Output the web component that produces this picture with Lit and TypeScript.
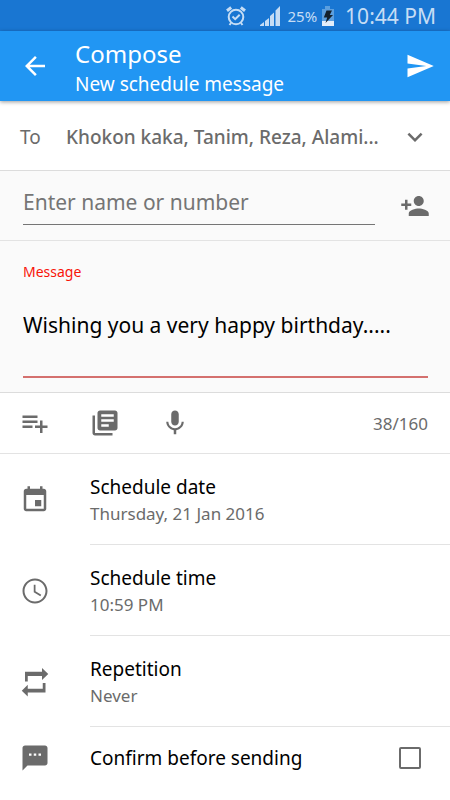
import { LitElement, html, css, svg } from "lit";
import { customElement, property, state } from "lit/decorators.js";

const ICONS = {
  back: svg`<path d="M20 11H7.83l5.59-5.59L12 4l-8 8 8 8 1.41-1.41L7.83 13H20v-2z"/>`,
  send: svg`<path d="M2.01 21L23 12 2.01 3 2 10l15 2-15 2z"/>`,
  chevron: svg`<path d="M16.59 8.59L12 13.17 7.41 8.59 6 10l6 6 6-6z"/>`,
  personAdd: svg`<path d="M15 12c2.21 0 4-1.79 4-4s-1.79-4-4-4-4 1.79-4 4 1.79 4 4 4zm-9-2V7H4v3H1v2h3v3h2v-3h3v-2H6zm9 4c-2.67 0-8 1.34-8 4v2h16v-2c0-2.66-5.33-4-8-4z"/>`,
  listAdd: svg`<path d="M14 10H2v2h12v-2zm0-4H2v2h12V6zm4 8v-4h-2v4h-4v2h4v4h2v-4h4v-2h-4zM2 16h8v-2H2v2z"/>`,
  library: svg`<path d="M4 6H2v14c0 1.1.9 2 2 2h14v-2H4V6zm16-4H8c-1.1 0-2 .9-2 2v12c0 1.1.9 2 2 2h12c1.1 0 2-.9 2-2V4c0-1.1-.9-2-2-2zm-1 9H9V9h10v2zm-4 4H9v-2h6v2zm4-8H9V5h10v2z"/>`,
  mic: svg`<path d="M12 14c1.66 0 2.99-1.34 2.99-3L15 5c0-1.66-1.34-3-3-3S9 3.34 9 5v6c0 1.66 1.34 3 3 3zm5.3-3c0 3-2.54 5.1-5.3 5.1S6.7 14 6.7 11H5c0 3.41 2.72 6.23 6 6.72V21h2v-3.28c3.28-.48 6-3.3 6-6.72h-1.7z"/>`,
  event: svg`<path d="M17 12h-5v5h5v-5zM16 1v2H8V1H6v2H5c-1.11 0-1.99.9-1.99 2L3 19c0 1.1.89 2 2 2h14c1.1 0 2-.9 2-2V5c0-1.1-.9-2-2-2h-1V1h-2zm3 18H5V8h14v11z"/>`,
  clock: svg`<path d="M11.99 2C6.47 2 2 6.48 2 12s4.47 10 9.99 10C17.52 22 22 17.52 22 12S17.52 2 11.99 2zM12 20.4c-4.64 0-8.4-3.76-8.4-8.4s3.76-8.4 8.4-8.4 8.4 3.76 8.4 8.4-3.76 8.4-8.4 8.4zm.4-13.4H11v6l5.25 3.15.75-1.23-4.6-2.67z"/>`,
  repeat: svg`<path d="M4 3.8h13.6V.8l5 4.8-5 4.8V7.200H6.200v4.300H4zM20.400 20.400H6.200v3.200L1.400 18.900l4.800-4.700v3.200h12v-4.600h2.200z"/>`,
  sms: svg`<path d="M20 2H4c-1.1 0-1.99.9-1.99 2L2 22l4-4h14c1.1 0 2-.9 2-2V4c0-1.1-.9-2-2-2zM9.200 10.200H7.200V8.400h2zm3.800 0h-2V8.400h2zm3.800 0h-2V8.400h2z"/>`,
};

type IconName = keyof typeof ICONS;

@customElement("app-icon")
class AppIcon extends LitElement {
  @property() name: IconName = "back";

  static styles = css`
    :host {
      display: block;
      flex: none;
      width: 30px;
      height: 30px;
    }
    .glyph {
      display: block;
      width: 100%;
      height: 100%;
      fill: currentColor;
    }
  `;

  render() {
    return html`<svg class="glyph" viewBox="0 0 24 24" aria-hidden="true">${ICONS[this.name]}</svg>`;
  }
}

@customElement("status-bar")
class StatusBar extends LitElement {
  static styles = css`
    :host {
      display: flex;
      align-items: center;
      justify-content: flex-end;
      height: 31px;
      padding: 0 14px 0 0;
      background: #1976d2;
      color: #c6ddf5;
    }
    .alarm {
      width: 20px;
      height: 20px;
      margin-right: 14px;
    }
    .signal {
      width: 20px;
      height: 20px;
      margin-right: 7px;
    }
    .level {
      font-size: 15px;
      margin-right: 4px;
    }
    .battery {
      width: 14px;
      height: 20px;
      margin-right: 10px;
    }
    .time {
      font-size: 21px;
    }
  `;

  render() {
    return html`
      <svg class="alarm" viewBox="0 0 20 20" fill="none" stroke="currentColor" stroke-width="2" aria-hidden="true">
        <circle cx="10" cy="11" r="7.3" />
        <path d="M6.5 10.5l2.7 2.7 4.5-4.5M5 17l-1.5 2M15 17l1.5 2" />
        <path d="M1 4.8L5.200 1.500M19 4.800L14.800 1.500" stroke-width="3" />
      </svg>
      <svg class="signal" viewBox="0 0 20 20" fill="currentColor" aria-hidden="true">
        <path d="M0 20v-1l4-3v4zM5 20v-5l4-3v8zM10 20V10l4-3.500V20zM15.500 20V4.500L20 0v20z" />
      </svg>
      <span class="level">25%</span>
      <svg class="battery" viewBox="0 0 14 20" aria-hidden="true">
        <path d="M4 0h5v3h4v13H1V3h3z" fill="#5c9fdf" />
        <path d="M1 15h12v5H1z" fill="#e3eefa" />
        <path d="M5.500 4.500H11L8.800 9H12l-7.500 8L6.200 11.500H2.800z" fill="#14202c" />
      </svg>
      <span class="time">10:44 PM</span>
    `;
  }
}

@customElement("schedule-row")
class ScheduleRow extends LitElement {
  @property() icon: IconName = "event";
  @property() heading = "";
  @property() detail = "";

  static styles = css`
    :host {
      display: block;
    }
    .row {
      display: flex;
      align-items: center;
      width: 100%;
      padding: 0 0 0 20px;
      border: 0;
      background: none;
      color: #6b6b6b;
      font: inherit;
      text-align: left;
      gap: 40px;
    }
    .text {
      display: flex;
      flex-direction: column;
      flex: 1;
      padding: 19px 0 17px;
      border-bottom: 1px solid #e3e3e3;
    }
    .heading {
      color: #000;
      font-size: 19px;
      line-height: 28px;
    }
    .detail {
      font-size: 17px;
      line-height: 26px;
    }
  `;

  render() {
    return html`
      <button class="row" type="button">
        <app-icon name=${this.icon}></app-icon>
        <span class="text">
          <span class="heading">${this.heading}</span>
          <span class="detail">${this.detail}</span>
        </span>
      </button>
    `;
  }
}

@customElement("app-root")
class AppRoot extends LitElement {
  @state() private message = "Wishing you a very happy birthday.....";

  static styles = css`
    :host {
      display: block;
      min-height: 100vh;
      background: #fff;
      color: #6b6b6b;
      font-family: "Noto Sans", "Open Sans", sans-serif;
    }
    * {
      box-sizing: border-box;
    }
    button {
      border: 0;
      padding: 0;
      background: none;
      color: inherit;
      font: inherit;
    }
    .appbar {
      position: relative;
      display: flex;
      align-items: center;
      padding: 0 15px 0 20px;
      background: #2196f3;
      color: #fff;
      box-shadow: 0 1px 4px rgba(0, 0, 0, 0.4);
    }
    .titles {
      flex: 1;
      padding: 8px 0 2px 25px;
    }
    .title {
      margin: 0;
      font-size: 24px;
      font-weight: 400;
      line-height: 30px;
    }
    .subtitle {
      margin: 0;
      font-size: 19px;
      line-height: 30px;
    }
    .to {
      display: flex;
      align-items: center;
      width: 100%;
      height: 70px;
      padding: 2px 20px 0;
      border-bottom: 1px solid #dcdcdc;
      text-align: left;
    }
    .to-label {
      width: 46px;
      font-size: 19px;
    }
    .recipients {
      flex: 1;
      font-size: 19px;
      font-weight: 500;
      white-space: nowrap;
    }
    .add {
      display: flex;
      align-items: center;
      gap: 25px;
      height: 70px;
      padding: 0 20px 0 23px;
      border-bottom: 1px solid #e3e3e3;
      background: #fafafa;
    }
    .add-input {
      flex: 1;
      min-width: 0;
      height: 38px;
      padding: 0 0 6px;
      border: 0;
      border-bottom: 1px solid #757575;
      border-radius: 0;
      outline: 0;
      background: none;
      color: #000;
      font: inherit;
      font-size: 21px;
    }
    .add-input::placeholder {
      color: #757575;
      opacity: 1;
    }
    .message {
      display: flex;
      flex-direction: column;
      gap: 28px;
      padding: 21px 22px 14px 23px;
      border-bottom: 1px solid #dcdcdc;
      background: #fafafa;
    }
    .message-label {
      color: #f81408;
      font-size: 14px;
      line-height: 20px;
    }
    .message-input {
      display: block;
      width: 100%;
      height: 68px;
      padding: 0;
      border: 0;
      border-bottom: 2px solid #d4706e;
      border-radius: 0;
      outline: 0;
      background: none;
      color: #000;
      font: inherit;
      font-size: 21px;
      line-height: 30px;
      resize: none;
      overflow: hidden;
    }
    .tools {
      display: flex;
      align-items: center;
      gap: 40px;
      height: 61px;
      padding: 0 22px 0 20px;
      border-bottom: 1px solid #e3e3e3;
    }
    .count {
      margin-left: auto;
      font-size: 17px;
    }
    .confirm {
      display: flex;
      align-items: center;
      gap: 40px;
      height: 62px;
      padding: 0 29px 0 20px;
    }
    .confirm-text {
      flex: 1;
      color: #000;
      font-size: 19px;
    }
    .check {
      appearance: none;
      width: 22px;
      height: 22px;
      margin: 0;
      border: 2px solid #6b6b6b;
      border-radius: 2px;
      background: #fff;
    }
    .check:checked {
      background: #2196f3;
    }
  `;

  private onInput(e: Event) {
    this.message = (e.target as HTMLTextAreaElement).value;
  }

  render() {
    return html`
      <status-bar></status-bar>
      <header class="appbar">
        <button type="button" aria-label="Back"><app-icon name="back"></app-icon></button>
        <div class="titles">
          <h1 class="title">Compose</h1>
          <p class="subtitle">New schedule message</p>
        </div>
        <button type="button" aria-label="Send"><app-icon name="send"></app-icon></button>
      </header>
      <main>
        <button class="to" type="button">
          <span class="to-label">To</span>
          <span class="recipients">Khokon kaka, Tanim, Reza, Alami...</span>
          <app-icon name="chevron"></app-icon>
        </button>
        <div class="add">
          <input class="add-input" type="text" placeholder="Enter name or number" aria-label="Enter name or number" />
          <button type="button" aria-label="Add contact"><app-icon name="personAdd"></app-icon></button>
        </div>
        <div class="message">
          <label class="message-label" for="message">Message</label>
          <textarea class="message-input" id="message" .value=${this.message} @input=${this.onInput}></textarea>
        </div>
        <div class="tools">
          <button type="button" aria-label="Add to list"><app-icon name="listAdd"></app-icon></button>
          <button type="button" aria-label="Templates"><app-icon name="library"></app-icon></button>
          <button type="button" aria-label="Dictate"><app-icon name="mic"></app-icon></button>
          <span class="count">${this.message.length}/160</span>
        </div>
        <schedule-row icon="event" heading="Schedule date" detail="Thursday, 21 Jan 2016"></schedule-row>
        <schedule-row icon="clock" heading="Schedule time" detail="10:59 PM"></schedule-row>
        <schedule-row icon="repeat" heading="Repetition" detail="Never"></schedule-row>
        <label class="confirm">
          <app-icon name="sms"></app-icon>
          <span class="confirm-text">Confirm before sending</span>
          <input class="check" type="checkbox" />
        </label>
      </main>
    `;
  }
}
